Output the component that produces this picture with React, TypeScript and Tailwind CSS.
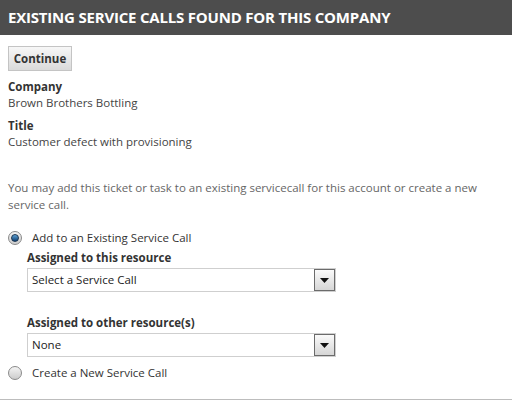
import { ReactNode } from 'react';

function Radio({ checked, label }: { checked?: boolean; label: string }) {
  return (
    <div className="flex items-center h-4 leading-4">
      <span className="ml-[8px] w-[14px] h-[14px] rounded-full border border-[#8a8a8a] bg-gradient-to-b from-[#f4f4f4] to-[#cccccc] flex items-center justify-center">
        {checked && (
          <span className="w-[8px] h-[8px] rounded-full bg-gradient-to-b from-[#5fa3d6] to-[#0c3f72] border border-[#1b3550]" />
        )}
      </span>
      <span className="ml-[10px] text-[11.5px] text-[#333]">{label}</span>
    </div>
  );
}

function Select({ value }: { value: string }) {
  return (
    <div className="ml-[27px] w-[309px] h-[24px] border border-[#cfcfcf] bg-white flex items-center justify-between">
      <span className="pl-[4px] text-[11.5px] text-[#222]">{value}</span>
      <span className="w-[21px] h-[22px] border border-[#6b6b6b] bg-gradient-to-b from-[#fafafa] to-[#d6d6d6] flex items-center justify-center">
        <svg width="9" height="5" viewBox="0 0 9 5">
          <path d="M0 0h9L4.5 5z" fill="#111" />
        </svg>
      </span>
    </div>
  );
}

function Field({ label, children }: { label: string; children: ReactNode }) {
  return (
    <div className="ml-2 leading-4">
      <div className="text-[11.5px] font-bold text-[#333]">{label}</div>
      <div className="text-[11.5px] text-[#444]">{children}</div>
    </div>
  );
}

export default function App() {
  return (
    <div className="w-[512px] h-[400px] bg-white font-['Open_Sans',sans-serif] overflow-hidden">
      <div className="h-[35px] bg-[#4d4d4d] pl-2 leading-[35px] text-[15px] font-bold text-white tracking-[-0.2px]">
        EXISTING SERVICE CALLS FOUND FOR THIS COMPANY
      </div>
      <button className="ml-2 mt-[11px] w-[64px] h-[25px] border border-[#c4c4c4] bg-gradient-to-b from-[#f7f7f7] to-[#dadada] text-[11.5px] font-bold text-[#333]">
        Continue
      </button>
      <div className="mt-[8px]">
        <Field label="Company">Brown Brothers Bottling</Field>
      </div>
      <div className="mt-[7px]">
        <Field label="Title">Customer defect with provisioning</Field>
      </div>
      <p className="mt-[29px] ml-2 mr-4 text-[11.5px] leading-[17px] text-[#666]">
        You may add this ticket or task to an existing servicecall for this account or create a new service call.
      </p>
      <div className="mt-[17px]">
        <Radio checked label="Add to an Existing Service Call" />
      </div>
      <div className="mt-[4px] ml-[27px] text-[11.5px] leading-4 font-bold text-[#333]">Assigned to this resource</div>
      <div className="mt-[2px]">
        <Select value="Select a Service Call" />
      </div>
      <div className="mt-[23px] ml-[27px] text-[11.5px] leading-4 font-bold text-[#333]">Assigned to other resource(s)</div>
      <div className="mt-[2px]">
        <Select value="None" />
      </div>
      <div className="mt-[8px]">
        <Radio label="Create a New Service Call" />
      </div>
      <div className="mt-[18px] border-t-2 border-[#bdbdbd]" />
    </div>
  );
}
